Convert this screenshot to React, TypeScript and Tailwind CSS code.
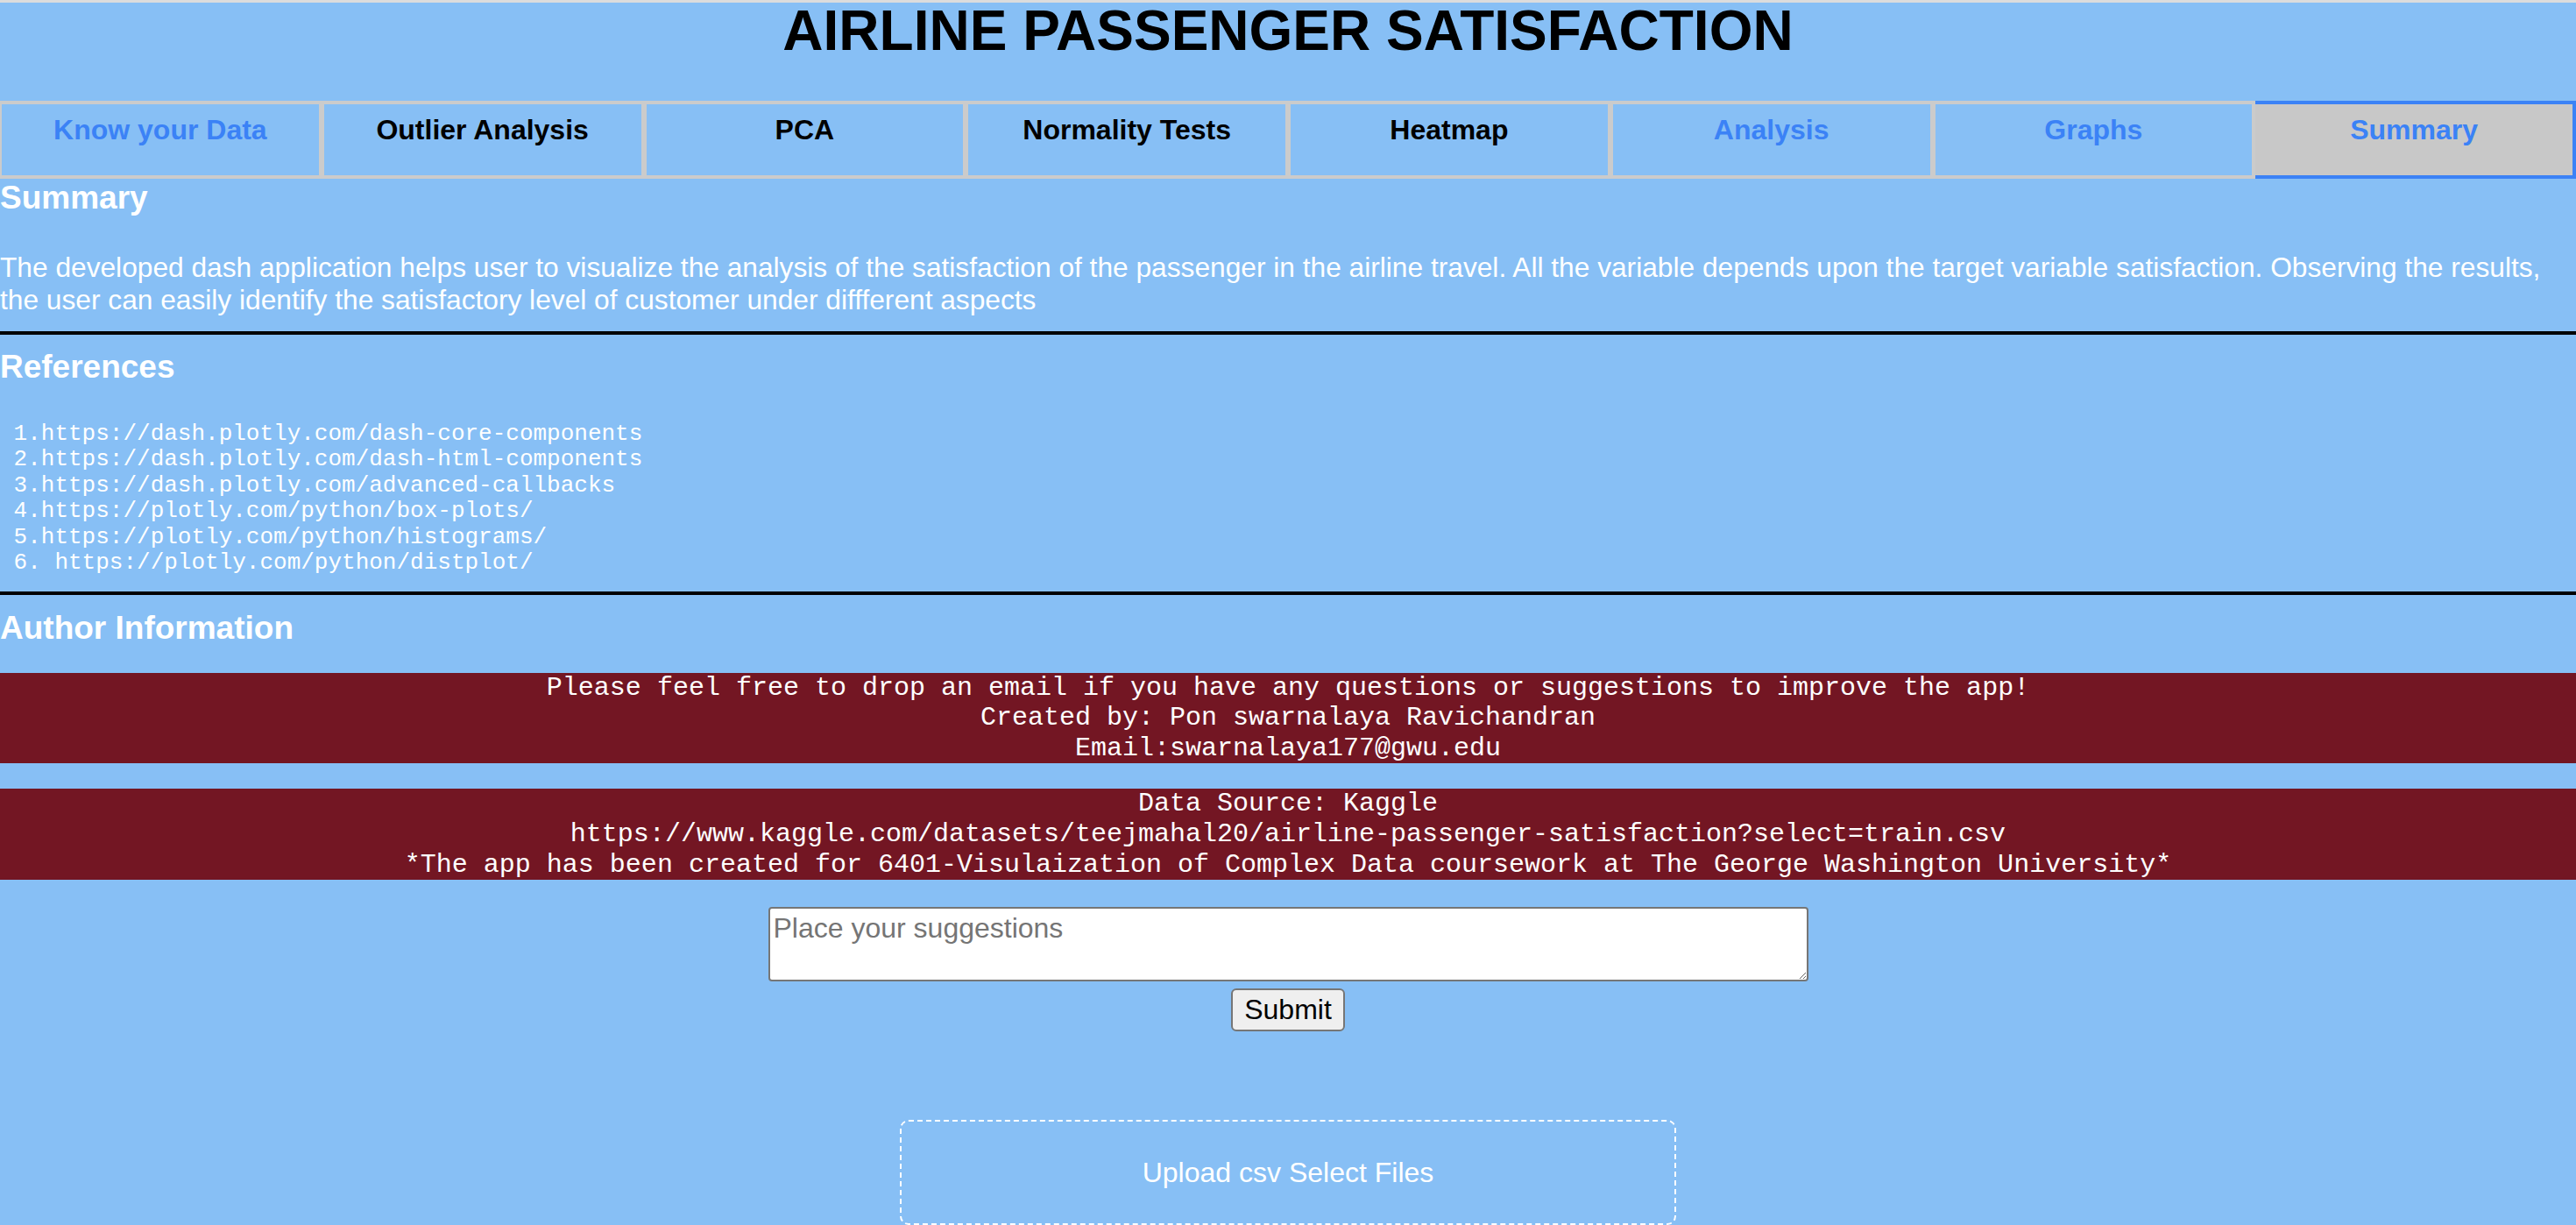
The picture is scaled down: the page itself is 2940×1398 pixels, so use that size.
import { useState } from 'react'

const tabs = [
  { label: 'Know your Data', blue: true },
  { label: 'Outlier Analysis', blue: false },
  { label: 'PCA', blue: false },
  { label: 'Normality Tests', blue: false },
  { label: 'Heatmap', blue: false },
  { label: 'Analysis', blue: true },
  { label: 'Graphs', blue: true },
  { label: 'Summary', blue: true },
]

const references = [
  ' 1.https://dash.plotly.com/dash-core-components',
  ' 2.https://dash.plotly.com/dash-html-components',
  ' 3.https://dash.plotly.com/advanced-callbacks',
  ' 4.https://plotly.com/python/box-plots/',
  ' 5.https://plotly.com/python/histograms/',
  ' 6. https://plotly.com/python/distplot/',
]

const App = () => {
  const [active, setActive] = useState('Summary')
  const [text, setText] = useState('')

  return (
    <div className="min-h-screen overflow-x-hidden border-t-[3px] border-[#dcdcdc] bg-[#87bff5] font-['Liberation_Sans',Arial,sans-serif]">
      <h1 className="mb-12 text-center text-[64px] leading-[64px] font-bold text-black">AIRLINE PASSENGER SATISFACTION</h1>

      <div className="flex">
        {tabs.map((tab) => {
          const selected = tab.label === active
          return (
            <div
              key={tab.label}
              onClick={() => setActive(tab.label)}
              className={
                selected
                  ? 'h-[89px] flex-1 cursor-pointer border-y-4 border-r-4 border-[#3b82f6] bg-[#c8c8c8] pt-[11px] text-center text-[32px] leading-[37px] font-bold text-[#3b82f6]'
                  : tab.blue
                    ? 'h-[89px] flex-1 cursor-pointer border-y-4 border-r-4 border-l-2 border-[#cbcbcb] pt-[11px] text-center text-[32px] leading-[37px] font-bold text-[#3b82f6]'
                    : 'h-[89px] flex-1 cursor-pointer border-y-4 border-r-4 border-l-2 border-[#cbcbcb] pt-[11px] text-center text-[32px] leading-[37px] font-bold text-black'
              }>
              {tab.label}
            </div>
          )
        })}
      </div>

      <h3 className="text-[37px] leading-[43px] font-bold text-white">Summary</h3>
      <p className="mt-[40px] text-[31.7px] leading-[36.8px] text-white">
        <span className="block whitespace-nowrap">
          The developed dash application helps user to visualize the analysis of the satisfaction of the passenger in the airline travel. All the variable depends upon the target variable satisfaction. Observing the results,
        </span>
        <span className="block whitespace-nowrap">the user can easily identify the satisfactory level of customer under diffferent aspects</span>
      </p>
      <hr className="mt-[17px] h-[4px] border-0 bg-black" />

      <h3 className="mt-[15px] text-[37px] leading-[43px] font-bold text-white">References</h3>
      <pre className="mt-[41px] font-['Liberation_Mono','Courier_New',monospace] text-[26px] leading-[29.5px] text-white">
        {references.join('\n')}
      </pre>
      <hr className="mt-[17px] h-[4px] border-0 bg-black" />

      <h3 className="mt-[16px] text-[37px] leading-[43px] font-bold text-white">Author Information</h3>

      <div className="mt-[30px] bg-[#731623] text-center font-['Liberation_Mono','Courier_New',monospace] text-[30px] leading-[34.6px] text-white">
        <div>Please feel free to drop an email if you have any questions or suggestions to improve the app!</div>
        <div>Created by: Pon swarnalaya Ravichandran</div>
        <div>Email:swarnalaya177@gwu.edu</div>
      </div>

      <div className="mt-[29px] bg-[#731623] text-center font-['Liberation_Mono','Courier_New',monospace] text-[30px] leading-[34.6px] text-white">
        <div>Data Source: Kaggle</div>
        <div>https://www.kaggle.com/datasets/teejmahal20/airline-passenger-satisfaction?select=train.csv</div>
        <div>*The app has been created for 6401-Visulaization of Complex Data coursework at The George Washington University*</div>
      </div>

      <div className="mt-[31px] flex flex-col items-center">
        <textarea
          value={text}
          onChange={(e) => setText(e.target.value)}
          placeholder="Place your suggestions"
          className="block h-[85px] w-[1187px] rounded-[4px] border-2 border-[#767676] bg-white p-[4px] text-[32px] leading-[37px] text-black placeholder:text-[#757575]"
        />
        <button className="mt-[8px] rounded-[6px] border-2 border-[#767676] bg-[#efefef] px-[13px] py-[4px] text-[32px] leading-[37px] text-black">
          Submit
        </button>
        <div className="mt-[101px] h-[120px] w-[886px] rounded-[10px] border-2 border-dashed border-white text-center text-[32px] leading-[116px] text-white">
          Upload csv Select Files
        </div>
      </div>
    </div>
  )
}

export default App
